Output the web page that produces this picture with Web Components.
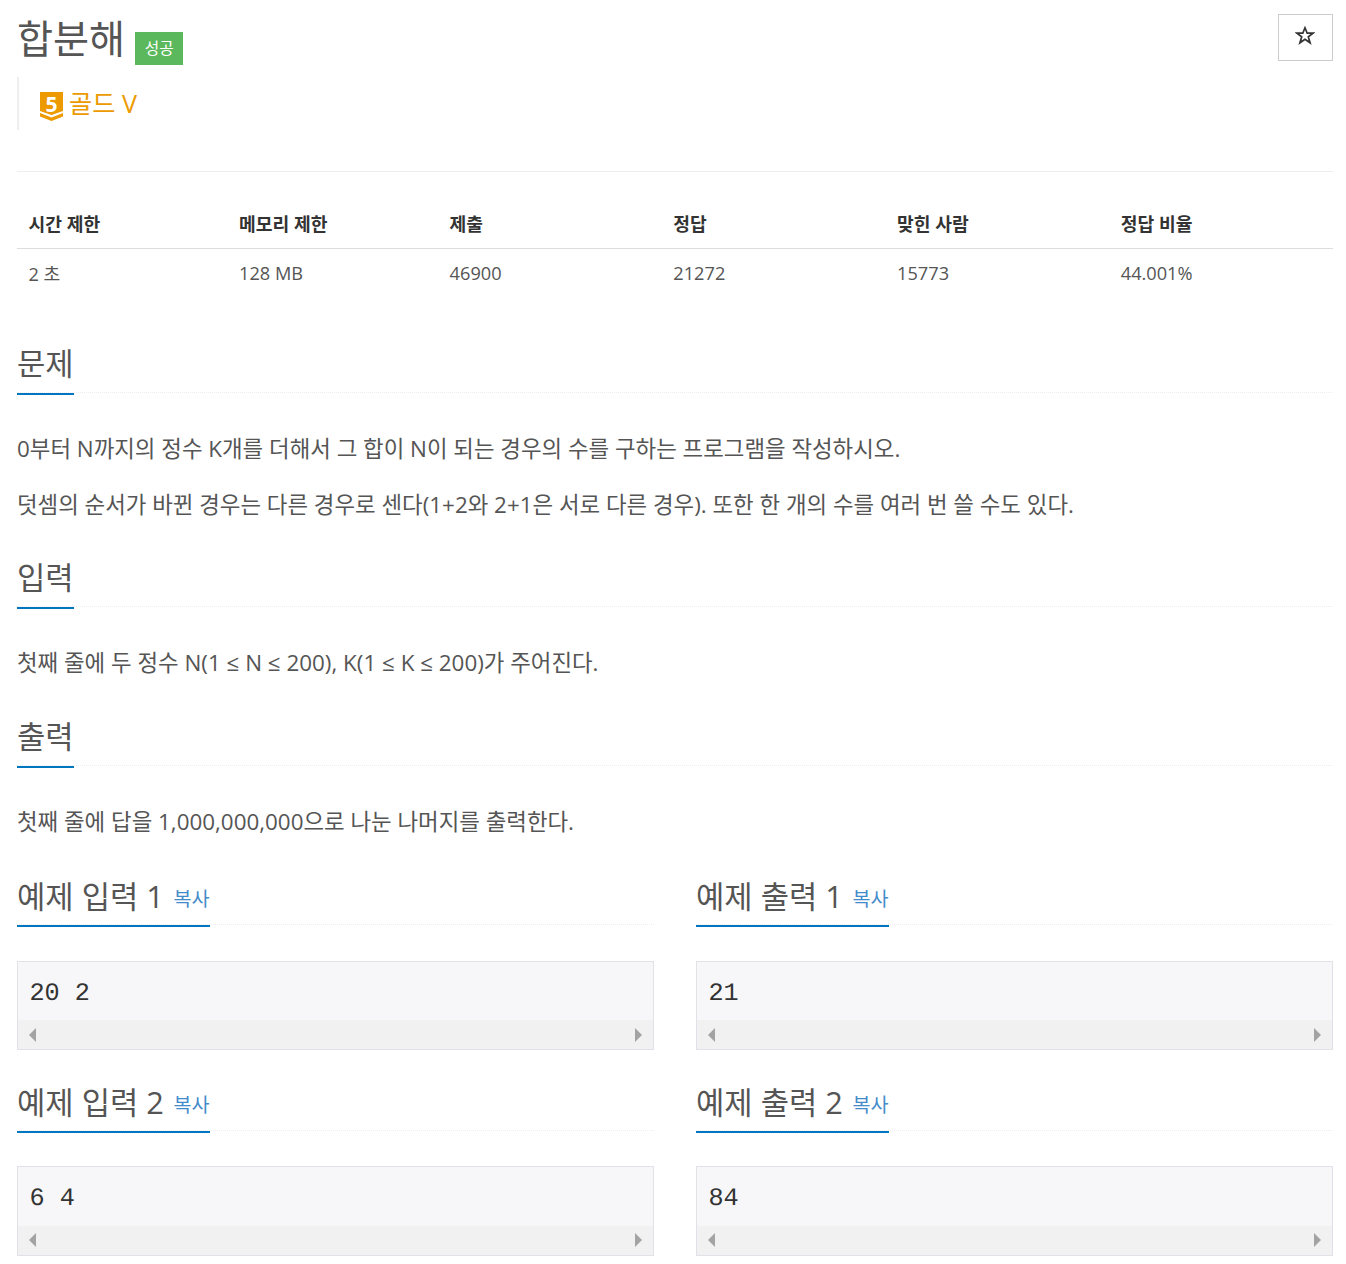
<!DOCTYPE html>
<html lang="ko">
<head>
<meta charset="utf-8">
<title>합분해</title>
<style>
    html, body { margin: 0; background: #fff; }
    body { font-family: "Open Sans", "Noto Sans CJK KR", sans-serif; color: #555; font-size: 22.4px; }
</style>
</head>
<body>
<template id="problem-page-tpl">
    <style>
        :host { display: block; padding: 0 13px 0 17px; }
        .cols { display: grid; grid-template-columns: 637px 637px; column-gap: 42px; padding-top: 0.500px; }
    </style>
    <problem-header></problem-header>
    <problem-stats></problem-stats>
    <problem-section title="문제" style="--top:33.600px">
        <p>0부터 N까지의 정수 K개를 더해서 그 합이 N이 되는 경우의 수를 구하는 프로그램을 작성하시오.</p>
        <p>덧셈의 순서가 바뀐 경우는 다른 경우로 센다(1+2와 2+1은 서로 다른 경우). 또한 한 개의 수를 여러 번 쓸 수도 있다.</p>
    </problem-section>
    <problem-section title="입력">
        <p>첫째 줄에 두 정수 N(1 ≤ N ≤ 200), K(1 ≤ K ≤ 200)가 주어진다.</p>
    </problem-section>
    <problem-section title="출력" style="--top:0.400px">
        <p>첫째 줄에 답을 1,000,000,000으로 나눈 나머지를 출력한다.</p>
    </problem-section>
    <div class="cols">
        <sample-box title="예제 입력 1" value="20 2"></sample-box>
        <sample-box title="예제 출력 1" value="21"></sample-box>
        <sample-box title="예제 입력 2" value="6 4"></sample-box>
        <sample-box title="예제 출력 2" value="84"></sample-box>
    </div>
</template>

<template id="problem-header-tpl">
    <style>
        :host { display: block; position: relative; height: 172px; box-sizing: border-box; border-bottom: 1px solid #eee; }
        h1 { margin: 0; padding-top: 13px; font-size: 39.2px; font-weight: 400; line-height: 50px; height: 63px; box-sizing: border-box; color: #555; display: flex; align-items: flex-start; }
        .label { background: #5cb85c; color: #fff; font-size: 15.700px; line-height: 33px; height: 33px; width: 48px; text-align: center; margin: 19px 0 0 10px; }
        .tier { margin-top: 14px; height: 53px; border-left: 2px solid #eee; padding-left: 21px; display: flex; align-items: flex-start; gap: 6px; color: #ec9a00; font-size: 25.200px; line-height: 52px; }
        .tier svg { margin-top: 15px; overflow: visible; }
        button { position: absolute; right: 0; top: 14px; width: 55px; height: 47px; background: #fff; border: 1px solid #ccc; padding: 0 2px 0 0; display: flex; align-items: center; justify-content: center; }
        button svg { margin-top: -5px; }
    </style>
    <h1>합분해<span class="label">성공</span></h1>
    <div class="tier">
        <svg width="23" height="29" viewBox="0 0 23 29">
            <path d="M0 0H23V19L11.500 23L0 19Z" fill="#ec9a00"/>
            <path d="M0 21L11.500 25.500L23 21V24.500L11.500 29L0 24.500Z" fill="#ec9a00"/>
            <text x="11.500" y="20" text-anchor="middle" font-family="Open Sans" font-weight="700" font-size="21" fill="#fff">5</text>
        </svg>
        <span>골드 V</span>
    </div>
    <button type="button" aria-label="즐겨찾기">
        <svg width="20" height="19" viewBox="0 0 20 19">
            <path d="M10 1.800L12.200 7.200H18L13.300 10.800L15.100 16.800L10 13.200L4.900 16.800L6.700 10.800L2 7.200H7.800Z" fill="none" stroke="#333" stroke-width="1.700"/>
        </svg>
    </button>
</template>

<template id="problem-stats-tpl">
    <style>
        :host { display: block; margin-top: 28px; }
        table { width: 100%; border-collapse: collapse; table-layout: fixed; font-size: 18.200px; color: #555; }
        th { text-align: left; font-weight: 700; padding: 0 12.500px 1px 11.500px; height: 48px; color: #333; border-bottom: 1px solid #ddd; box-sizing: border-box; width: 17%; }
        td { padding: 0 12.500px 0 11.500px; height: 48px; }
        th:nth-child(-n+2) { width: 16%; }
    </style>
    <table>
        <thead><tr><th>시간 제한</th><th>메모리 제한</th><th>제출</th><th>정답</th><th>맞힌 사람</th><th>정답 비율</th></tr></thead>
        <tbody><tr><td>2 초</td><td>128 MB</td><td>46900</td><td>21272</td><td>15773</td><td>44.001%</td></tr></tbody>
    </table>
</template>

<template id="problem-section-tpl">
    <style>
        :host { display: block; padding-top: var(--top, 0); }
        .head { border-bottom: 1px dotted #eee; height: 62.500px; box-sizing: border-box; margin-bottom: 2px; }
        h2 { display: inline-block; vertical-align: top; margin: 0; font-size: 30.800px; font-weight: 400; line-height: 58px; height: 64.500px; padding-top: 3.500px; box-sizing: border-box; border-bottom: 2px solid #0076c0; }
        .body { padding-top: 38px; }
        ::slotted(p) { margin: 0 0 24px; font-size: 22.400px; line-height: 32px; }
    </style>
    <div class="head"><h2></h2></div>
    <div class="body"><slot></slot></div>
</template>

<template id="sample-box-tpl">
    <style>
        :host { display: block; margin-bottom: 17.900px; }
        .head { border-bottom: 1px dotted #eee; height: 62.500px; box-sizing: border-box; }
        h2 { display: inline-block; vertical-align: top; margin: 0; font-size: 30.800px; font-weight: 400; line-height: 58px; height: 64.500px; padding-top: 5px; box-sizing: border-box; border-bottom: 2px solid #0076c0; white-space: nowrap; }
        a { font-size: 19.600px; line-height: 1; vertical-align: 2px; color: #428bca; margin-left: 1.500px; }
        .pre { margin-top: 35.600px; border: 1px solid #e1e1e8; background: #f7f7f9; box-sizing: border-box; height: 89.600px; display: flex; flex-direction: column; }
        code { flex: 1 1 0; min-height: 0; padding: 4px 12px 0 11.500px; font: 25.200px/56px "Liberation Mono", monospace; color: #333; white-space: pre; text-rendering: geometricPrecision; }
        .bar { height: 29px; flex: none; background: #f1f1f1; display: flex; justify-content: space-between; align-items: center; padding: 0 11px; }
        i { width: 0; height: 0; border-top: 7px solid transparent; border-bottom: 7px solid transparent; }
        .l { border-right: 7px solid #a3a3a3; }
        .r { border-left: 7px solid #a3a3a3; }
    </style>
    <div class="head"><h2><span class="t"></span> <a>복사</a></h2></div>
    <div class="pre"><code></code><div class="bar"><i class="l"></i><i class="r"></i></div></div>
</template>

<script>
    // Shared base: clones the template named after the tag into an open shadow root
    class BaseEl extends HTMLElement {
        constructor() {
            super();
            this.attachShadow({ mode: 'open' });
            const tpl = document.getElementById(`${this.localName}-tpl`);
            this.shadowRoot.appendChild(tpl.content.cloneNode(true));
        }
    }

    class ProblemPage extends BaseEl {}
    class ProblemHeader extends BaseEl {}
    class ProblemStats extends BaseEl {}

    class ProblemSection extends BaseEl {
        connectedCallback() {
            this.shadowRoot.querySelector('h2').textContent = this.getAttribute('title');
            this.removeAttribute('title');
        }
    }

    class SampleBox extends BaseEl {
        connectedCallback() {
            this.shadowRoot.querySelector('.t').textContent = this.getAttribute('title');
            this.shadowRoot.querySelector('code').textContent = this.getAttribute('value');
            this.removeAttribute('title');
        }
    }

    customElements.define('problem-header', ProblemHeader);
    customElements.define('problem-stats', ProblemStats);
    customElements.define('problem-section', ProblemSection);
    customElements.define('sample-box', SampleBox);
    customElements.define('problem-page', ProblemPage);
</script>
<problem-page></problem-page>
</body>
</html>
